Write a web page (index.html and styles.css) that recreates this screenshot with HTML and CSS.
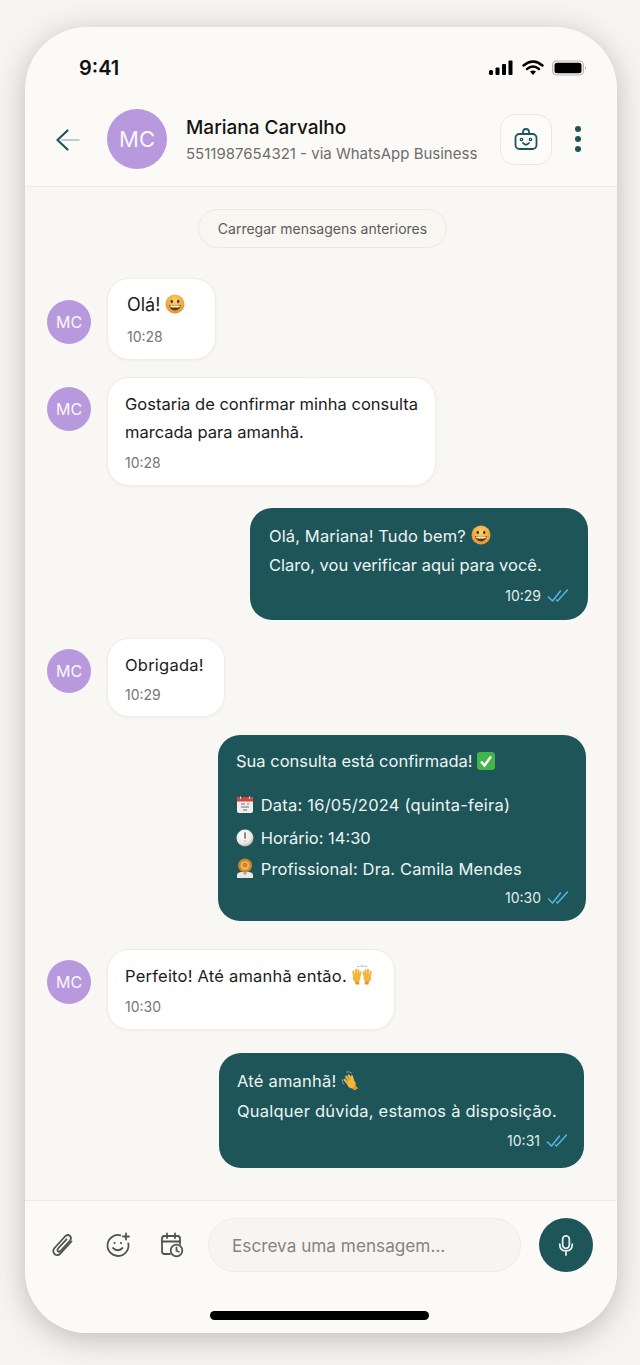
FILE: index.html
```html
<!DOCTYPE html>
<html lang="pt-BR">
<head>
    <meta charset="UTF-8">
    <meta name="viewport" content="width=device-width, initial-scale=1.0">
    <title>Conversa</title>
    <link rel="stylesheet" href="styles.css">
</head>
<body>
    <svg class="defs" width="0" height="0">
        <defs>
            <radialGradient id="faceGrad" cx="50%" cy="35%" r="65%">
                <stop offset="0%" stop-color="#fbd568"/>
                <stop offset="100%" stop-color="#e8912f"/>
            </radialGradient>
            <radialGradient id="clockGrad" cx="40%" cy="35%" r="70%">
                <stop offset="0%" stop-color="#ffffff"/>
                <stop offset="70%" stop-color="#e9e6e3"/>
                <stop offset="100%" stop-color="#a9a5a2"/>
            </radialGradient>
            <symbol id="grin" viewBox="0 0 20 20">
                <circle cx="10" cy="10" r="9.500" fill="url(#faceGrad)"/>
                <ellipse cx="6.800" cy="7.400" rx="1.200" ry="1.700" fill="#4a3216"/>
                <ellipse cx="13.200" cy="7.400" rx="1.200" ry="1.700" fill="#4a3216"/>
                <path d="M4 11 Q10 13 16 11 Q15 16.400 10 16.400 Q5 16.400 4 11Z" fill="#5a3a18"/>
                <path d="M5 11.500 Q10 13 15 11.500 L14.600 13 Q10 14.200 5.400 13Z" fill="#fff"/>
            </symbol>
            <symbol id="ticks" viewBox="0 0 22 14">
                <path d="M2.500 8 L6.500 12 L14.500 2 M10.500 11 L11.500 12 L21.500 1" fill="none" stroke="#58b4e6" stroke-width="1.500" stroke-linecap="round" stroke-linejoin="round"/>
            </symbol>
            <symbol id="hand" viewBox="0 0 10 18">
                <g fill="none" stroke="#f2b63c" stroke-width="2" stroke-linecap="round">
                    <path d="M2 9 L1.200 4.500 M4 8 L4 2.800 M6 8 L6.500 3.200 M7.500 9 L8.500 5.200"/>
                </g>
                <ellipse cx="4.600" cy="11" rx="3.800" ry="4" fill="#f2b63c"/>
                <path d="M3 14.500 H7 L7.500 17.500 H3.500Z" fill="#e0962e"/>
            </symbol>
        </defs>
    </svg>

    <div class="phone">
        <div class="status">
            <span class="clock">9:41</span>
            <div class="status-icons">
                <svg width="26" height="16" viewBox="0 0 26 16"><rect x="1" y="10" width="4" height="5" rx="1.500"/><rect x="7.500" y="7.500" width="4" height="7.500" rx="1"/><rect x="14" y="4" width="4" height="11" rx="1"/><rect x="20.500" y="0.500" width="4" height="14.500" rx="1"/></svg>
                <svg width="22" height="16" viewBox="0 0 22 16"><path d="M1.500 5.500 Q11 -2.500 20.500 5.500 M5 9 Q11 4 17 9" fill="none" stroke="#000" stroke-width="2.400" stroke-linecap="round"/><path d="M8 11.600 Q11 9.400 14 11.600 L11 15Z"/></svg>
                <svg width="36" height="16" viewBox="0 0 36 16"><rect x="0.700" y="1" width="30.600" height="14" rx="4" fill="none" stroke="#b5b3af" stroke-width="1.200"/><rect x="2.500" y="2.800" width="27" height="10.400" rx="2.500"/><path d="M33 6 Q35 8 33 10Z" fill="#b5b3af"/></svg>
            </div>
        </div>

        <header class="header">
            <svg class="back" width="24" height="22" viewBox="0 0 24 22"><path d="M6 11 H23" fill="none" stroke="#a9bfbf" stroke-width="1.600" stroke-linecap="round"/><path d="M11.500 1.500 L1.500 11 L11.500 20.500" fill="none" stroke="#1e5559" stroke-width="2.200" stroke-linecap="round" stroke-linejoin="round"/></svg>
            <div class="avatar avatar-big">MC</div>
            <div class="contact">
                <div class="contact-name">Mariana Carvalho</div>
                <div class="contact-sub">5511987654321 - via WhatsApp Business</div>
            </div>
            <button class="bot-btn">
                <svg width="24" height="24" viewBox="0 0 24 24" fill="none" stroke="#1e5559" stroke-width="1.800" stroke-linecap="round" stroke-linejoin="round"><rect x="1.500" y="7" width="21" height="15" rx="4"/><path d="M9 7 V5 Q9 2 12 2 Q15 2 15 5 V7"/><circle cx="7.500" cy="12.500" r="1.200" stroke-width="1.300"/><circle cx="16.500" cy="12.500" r="1.200" stroke-width="1.300"/><path d="M9 16 Q12 19.500 15 16"/></svg>
            </button>
            <div class="kebab"><i></i><i></i><i></i></div>
        </header>

        <main class="chat">
            <div class="load-more">Carregar mensagens anteriores</div>

            <div class="row m1">
                <div class="avatar avatar-small avatar-low">MC</div>
                <div class="bubble in b1">
                    <p class="line line-big">Olá! <svg class="emoji" width="20" height="20"><use href="#grin"/></svg></p>
                    <div class="time">10:28</div>
                </div>
            </div>

            <div class="row m2">
                <div class="avatar avatar-small avatar-high">MC</div>
                <div class="bubble in">
                    <p class="line">Gostaria de confirmar minha consulta</p>
                    <p class="line">marcada para amanhã.</p>
                    <div class="time">10:28</div>
                </div>
            </div>

            <div class="row right m3">
                <div class="bubble out b3">
                    <p class="line line-snug">Olá, Mariana! Tudo bem? <svg class="emoji" width="20" height="20"><use href="#grin"/></svg></p>
                    <p class="line">Claro, vou verificar aqui para você.</p>
                    <div class="time">10:29 <svg width="22" height="14"><use href="#ticks"/></svg></div>
                </div>
            </div>

            <div class="row m4">
                <div class="avatar avatar-small">MC</div>
                <div class="bubble in b4">
                    <p class="line line-wide">Obrigada!</p>
                    <div class="time">10:29</div>
                </div>
            </div>

            <div class="row right m5">
                <div class="bubble out b5">
                    <p class="line">Sua consulta está confirmada! <svg class="emoji" width="18" height="18" viewBox="0 0 18 18"><rect width="18" height="18" rx="3" fill="#3fb54a"/><path d="M4 9.500 L7.500 13.500 L14 4.500" fill="none" stroke="#fff" stroke-width="2.500"/></svg></p>
                    <p class="line line-gap"><svg class="emoji icon-lead" width="18" height="18" viewBox="0 0 18 18"><rect x="1" y="1" width="16" height="16" rx="2" fill="#f1efec"/><path d="M1 3 Q1 1 3 1 H15 Q17 1 17 3 V5.500 H1Z" fill="#d9433c"/><path d="M4.500 0.500 V3 M13.500 0.500 V3" stroke="#f1efec" stroke-width="1"/><path d="M5 8 H9 M11 8 H13 M5 11 H13 M7 14 H11" stroke="#9a9a9a" stroke-width="1.300"/></svg> <span class="line-wide">Data: 16/05/2024 (quinta-feira)</span></p>
                    <p class="line line-mid"><svg class="emoji icon-lead" width="18" height="18" viewBox="0 0 18 18"><circle cx="9" cy="9" r="8.500" fill="url(#clockGrad)"/><path d="M9 4 V9" fill="none" stroke="#5c5552" stroke-width="1.400" stroke-linecap="round"/><circle cx="9" cy="12" r="0.800" fill="#b0aaa6"/></svg> Horário: 14:30</p>
                    <p class="line line-tight line-snug"><svg class="emoji icon-lead" width="18" height="20" viewBox="0 0 18 20"><path d="M1 20 V17 Q1 14.500 5 14 H13 Q17 14.500 17 17 V20Z" fill="#ece8e3"/><path d="M7 14.500 L9 17 L11 14.500Z" fill="#7f93a3"/><circle cx="9" cy="7.500" r="7" fill="#c9852a"/><circle cx="9" cy="7.500" r="4.600" fill="#eeb35a"/><circle cx="9" cy="7" r="2.400" fill="#c9852a"/></svg> Profissional: Dra. Camila Mendes</p>
                    <div class="time">10:30 <svg width="22" height="14"><use href="#ticks"/></svg></div>
                </div>
            </div>

            <div class="row m6">
                <div class="avatar avatar-small">MC</div>
                <div class="bubble in b6">
                    <p class="line"><span class="line-wide">Perfeito! Até amanhã então.</span> <svg class="emoji" width="20" height="20" viewBox="0 0 20 20"><path d="M6 1.500 H6.800 M9 1 H9.800 M11 1 H11.800 M13.500 1.500 H14.300" stroke="#9a9a96" stroke-width="1" stroke-linecap="round"/><use href="#hand" x="0" y="2" width="10" height="18"/><g transform="translate(20 0) scale(-1 1)"><use href="#hand" x="0" y="2" width="10" height="18"/></g></svg></p>
                    <div class="time">10:30</div>
                </div>
            </div>

            <div class="row right m7">
                <div class="bubble out b7">
                    <p class="line line-wide">Até amanhã! <svg class="emoji" width="19" height="19" viewBox="0 0 20 20"><path d="M6 1 Q9 0 11 2 M1 9 Q1 12 3 14" fill="none" stroke="#7fa9c8" stroke-width="1" stroke-linecap="round"/><g transform="rotate(-32 10 11)"><use href="#hand" x="3" y="1" width="14" height="21"/></g></svg></p>
                    <p class="line line-wide line-nudge">Qualquer dúvida, estamos à disposição.</p>
                    <div class="time">10:31 <svg width="22" height="14"><use href="#ticks"/></svg></div>
                </div>
            </div>
        </main>

        <footer class="composer">
            <div class="composer-row">
                <svg class="tool" width="26" height="26" viewBox="0 0 26 26" fill="none" stroke="#4f5454" stroke-width="1.800" stroke-linecap="round" stroke-linejoin="round"><path d="M21.500 9.500 L10.500 21.500 Q7.500 24.500 4.500 22 Q2 19 4.500 16 L15 4.500 Q17.500 2 20 3.800 Q22 6 20 8.500 L10.500 19 Q9 20.300 7.800 19.300 Q6.800 18 8 16.500 L16.500 7.300"/></svg>
                <svg class="tool" width="26" height="26" viewBox="0 0 26 26" fill="none" stroke="#4f5454" stroke-width="1.800" stroke-linecap="round"><path d="M15.500 3.300 A10.500 10.500 0 1 0 23.300 11.500"/><circle cx="9.500" cy="11" r="1.100" fill="#4f5454" stroke="none"/><circle cx="16" cy="11" r="1.100" fill="#4f5454" stroke="none"/><path d="M8 16 Q12.800 20.500 17.500 16"/><path d="M21 1.500 V7.500 M18 4.500 H24"/></svg>
                <svg class="tool" width="24" height="26" viewBox="0 0 24 26" fill="none" stroke="#4f5454" stroke-width="1.800" stroke-linecap="round"><path d="M10 22 H4.500 Q2 22 2 19.500 V6.500 Q2 4 4.500 4 H17.500 Q20 4 20 6.500 V12"/><path d="M2 9.500 H20 M7 1.500 V6 M15 1.500 V6"/><circle cx="16.500" cy="18.500" r="5.800"/><path d="M16.500 15.500 V18.700 L18.700 19.800"/></svg>
                <div class="input">Escreva uma mensagem...</div>
                <button class="mic-btn">
                    <svg width="20" height="24" viewBox="0 0 24 28" fill="none" stroke="#e6f0ef" stroke-width="2.100" stroke-linecap="round"><rect x="8" y="3" width="8" height="15" rx="4"/><path d="M4.500 13 Q4.500 21 12 21 Q19.500 21 19.500 13 M12 21 V26"/></svg>
                </button>
            </div>
            <div class="home-bar"></div>
        </footer>
    </div>
</body>
</html>
```

FILE: styles.css
```css
* {
    box-sizing: border-box;
}

body {
    margin: 0;
    width: 640px;
    height: 1365px;
    padding: 27px 23px 32px 25px;
    background: #f7f5f2;
    font-family: Inter, "Noto Sans", sans-serif;
    color: #1b1b1b;
    overflow: hidden;
}

.defs {
    position: absolute;
}

.phone {
    height: 1306px;
    display: flex;
    flex-direction: column;
    background: #fcfaf7;
    border-radius: 62px;
    box-shadow: 0 6px 30px rgba(60, 55, 45, 0.3);
    overflow: hidden;
}

.status {
    height: 70px;
    flex: none;
    display: flex;
    justify-content: space-between;
    align-items: flex-end;
    padding: 0 29px 17px 54px;
}

.clock {
    font-size: 20px;
    font-weight: 600;
    line-height: 24px;
    color: #111;
}

.status-icons {
    display: flex;
    align-items: center;
    gap: 8px;
    padding-bottom: 4px;
}

.header {
    height: 90px;
    flex: none;
    display: flex;
    align-items: center;
    padding: 0 36px 6px 31px;
    border-bottom: 1px solid #eeebe6;
}

.back {
    flex: none;
    margin-top: 2px;
}

.avatar {
    flex: none;
    display: flex;
    align-items: center;
    justify-content: center;
    border-radius: 50%;
    background: #b899de;
    color: #fbf8ff;
}

.avatar-big {
    width: 60px;
    height: 60px;
    margin-left: 27px;
    font-size: 22px;
}

.avatar-small {
    width: 44px;
    height: 44px;
    margin-top: 11px;
    font-size: 16px;
}

.avatar-low {
    margin-top: 22px;
}

.avatar-high {
    margin-top: 10px;
}

.contact {
    flex: 1;
    margin-left: 19px;
    padding-top: 3px;
}

.contact-name {
    font-size: 19px;
    font-weight: 500;
    line-height: 26px;
    color: #151515;
}

.contact-sub {
    margin-top: 1px;
    font-size: 15px;
    line-height: 24px;
    color: #6d6d6d;
}

.bot-btn {
    width: 52px;
    height: 51px;
    flex: none;
    margin-top: 1px;
    padding: 0;
    display: flex;
    align-items: center;
    justify-content: center;
    background: #fdfcfa;
    border: 1px solid #e9e7e2;
    border-radius: 15px;
}

.kebab {
    flex: none;
    margin-left: 23px;
    margin-top: 1px;
    display: flex;
    flex-direction: column;
    gap: 4px;
}

.kebab i {
    width: 6px;
    height: 6px;
    border-radius: 50%;
    background: #1e5559;
}

.chat {
    flex: 1;
    background: #f9f7f3;
    padding: 22px 29px 0 22px;
}

.load-more {
    width: 249px;
    height: 39px;
    margin-left: 151px;
    display: flex;
    align-items: center;
    justify-content: center;
    font-size: 14px;
    color: #5c5c5a;
    background: #f8f6f1;
    border: 1px solid #ebe8e1;
    border-radius: 20px;
}

.row {
    display: flex;
    align-items: flex-start;
    gap: 16px;
}

.right {
    justify-content: flex-end;
}

.m1 { margin-top: 30px; }
.m2 { margin-top: 17px; }
.m3 { margin-top: 22px; }
.m4 { margin-top: 18px; }
.m5 { margin-top: 18px; margin-right: 2px; }
.m6 { margin-top: 28px; }
.m7 { margin-top: 23px; margin-right: 4px; }

.bubble {
    border-radius: 22px;
}

.in {
    padding: 12px 17px 12px;
    background: #fff;
    border: 1px solid #f0ede8;
    box-shadow: 0 1px 3px rgba(70, 60, 40, 0.05);
}

.out {
    padding: 14px 20px 14px 19px;
    background: #1e5559;
    color: #edf4f3;
}

/* cada balão tem largura e respiro um pouco diferentes */
.b1 { width: 109px; padding-left: 19px; }
.b1 .time { margin-top: 8px; }
.b3 { width: 338px; }
.b4 { width: 118px; padding-bottom: 11px; }
.b4 .time { margin-top: 6px; }
.b5 { width: 368px; padding: 12px 18px 13px; }
.b6 { width: 288px; }
.b7 { width: 365px; padding: 14px 17px 17px 18px; }

.line {
    margin: 0;
    font-size: 16.500px;
    line-height: 28px;
    white-space: nowrap;
}

.out .line {
    line-height: 29px;
}

.line-big {
    font-size: 18px;
}

.line-wide {
    letter-spacing: 0.22px;
}

.line-snug {
    letter-spacing: 0.12px;
}

.line-gap {
    margin-top: 15px;
}

.line-mid {
    margin-top: 4px;
}

.line-tight {
    margin-top: 2px;
}

.line-nudge {
    margin-top: 1px;
}

.emoji {
    vertical-align: -3px;
}

.icon-lead {
    margin-right: 2px;
}

.time {
    margin-top: 7px;
    font-size: 14px;
    line-height: 20px;
    color: #767676;
}

.out .time {
    margin-top: 6px;
    display: flex;
    justify-content: flex-end;
    align-items: center;
    gap: 5px;
    color: #e1ecec;
}

.out.b5 .time {
    margin-top: 4px;
}

.out.b7 .time {
    margin-top: 5px;
}

.composer {
    height: 133px;
    flex: none;
    border-top: 1px solid #eeebe6;
    background: #fcfaf7;
}

.composer-row {
    display: flex;
    align-items: center;
    padding: 17px 24px 0 25px;
}

.tool {
    flex: none;
    margin-right: 29px;
}

.input {
    flex: 1;
    height: 54px;
    margin-left: -5px;
    display: flex;
    align-items: center;
    padding-left: 23px;
    font-size: 17.200px;
    color: #85857f;
    background: #f7f5f1;
    border: 1px solid #efece6;
    border-radius: 27px;
}

.mic-btn {
    width: 54px;
    height: 54px;
    flex: none;
    margin-left: 18px;
    padding: 0;
    display: flex;
    align-items: center;
    justify-content: center;
    background: #1e5559;
    border: none;
    border-radius: 50%;
}

.home-bar {
    width: 219px;
    height: 9px;
    margin: 39px 0 0 185px;
    background: #000;
    border-radius: 5px;
}
```
